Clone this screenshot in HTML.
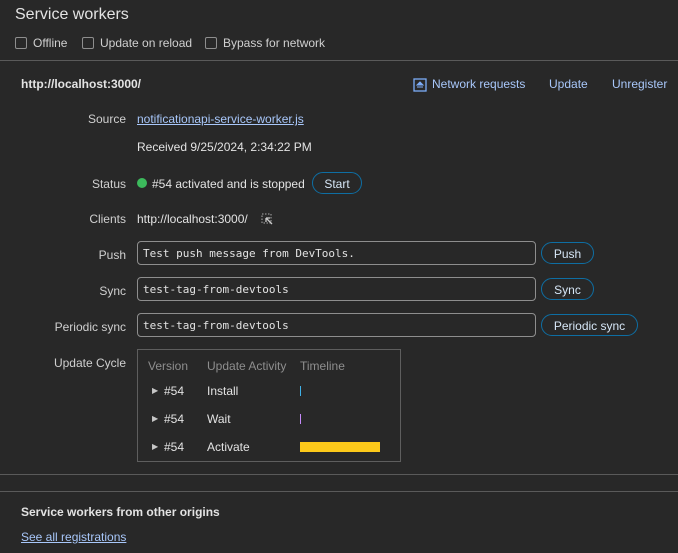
<!DOCTYPE html>
<html><head><meta charset="utf-8"><style>
html,body{margin:0;padding:0;background:#282828;width:678px;height:553px;overflow:hidden;font-family:"Liberation Sans","DejaVu Sans",sans-serif;color:#e3e3e3;font-size:12px}
.a{position:absolute;white-space:nowrap}
.lbl{position:absolute;right:552px;color:#d0d0d0;font-size:12px;white-space:nowrap}
.cb{position:absolute;top:37px;width:10px;height:10px;border:1px solid #8e8e8e;border-radius:2px}
.link{color:#a8c7fa}
.btn{position:absolute;height:22px;border:1px solid #0e6ea3;border-radius:12px;color:#d6e6f6;font-size:12px;line-height:22px;text-align:center;box-sizing:border-box}
.inp{position:absolute;left:137px;width:399px;height:24px;border:1px solid #8e8e8e;border-radius:4px;box-sizing:border-box;font-family:"DejaVu Sans Mono","Liberation Mono",monospace;font-size:11px;line-height:24px;padding-left:5px;color:#e3e3e3}
.hr{position:absolute;left:0;width:678px;height:1px;background:#5a5a5a}
.tri{position:absolute;font-size:8px;color:#c7c7c7}
</style></head><body>
<div class="a" style="left:15px;top:6px;font-size:16px;color:#e3e3e3">Service workers</div>
<div class="cb" style="left:15px"></div><div class="a" style="left:33px;top:36px;color:#d0d0d0">Offline</div>
<div class="cb" style="left:82px"></div><div class="a" style="left:100px;top:36px;color:#d0d0d0">Update on reload</div>
<div class="cb" style="left:205px"></div><div class="a" style="left:223px;top:36px;color:#d0d0d0">Bypass for network</div>
<div class="hr" style="top:60px"></div>
<div class="a" style="left:21px;top:77px;font-weight:bold;font-size:12px">http://localhost:3000/</div>
<svg class="a" style="left:413px;top:78px" width="14" height="14" viewBox="0 0 14 14"><rect x="1" y="1" width="12" height="12" fill="none" stroke="#7cacf8" stroke-width="1.3"/><path d="M4 9h6M7 4l-3 3h6z" stroke="#7cacf8" fill="#7cacf8" stroke-width="1"/></svg>
<div class="a link" style="left:432px;top:77px">Network requests</div>
<div class="a link" style="left:549px;top:77px">Update</div>
<div class="a link" style="left:612px;top:77px">Unregister</div>
<div class="lbl" style="top:112px">Source</div>
<div class="a link" style="left:137px;top:112px;text-decoration:underline">notificationapi-service-worker.js</div>
<div class="a" style="left:137px;top:140px">Received 9/25/2024, 2:34:22 PM</div>
<div class="lbl" style="top:177px">Status</div>
<div class="a" style="left:137px;top:178px;width:10px;height:10px;border-radius:50%;background:#3cba5c"></div>
<div class="a" style="left:152px;top:177px">#54 activated and is stopped</div>
<div class="btn" style="left:312px;top:172px;width:50px">Start</div>
<div class="lbl" style="top:212px">Clients</div>
<div class="a" style="left:137px;top:212px">http://localhost:3000/</div>
<svg class="a" style="left:261px;top:213px" width="12" height="12" viewBox="0 0 12 12"><rect x="1" y="1" width="9" height="9" fill="none" stroke="#aaa" stroke-dasharray="1.5 1.5"/><path d="M5 5l6 6M5 5h4M5 5v4" stroke="#ccc" stroke-width="1.3" fill="none"/></svg>
<div class="lbl" style="top:248px">Push</div>
<div class="inp" style="top:241px">Test push message from DevTools.</div>
<div class="btn" style="left:541px;top:242px;width:53px">Push</div>
<div class="lbl" style="top:284px">Sync</div>
<div class="inp" style="top:277px">test-tag-from-devtools</div>
<div class="btn" style="left:541px;top:278px;width:53px">Sync</div>
<div class="lbl" style="top:320px">Periodic sync</div>
<div class="inp" style="top:313px">test-tag-from-devtools</div>
<div class="btn" style="left:541px;top:314px;width:97px">Periodic sync</div>
<div class="lbl" style="top:356px">Update Cycle</div>
<div class="a" style="left:137px;top:349px;width:262px;height:111px;border:1px solid #5e5e5e"></div>
<div class="a" style="left:148px;top:359px;color:#8e8e8e">Version</div>
<div class="a" style="left:207px;top:359px;color:#8e8e8e">Update Activity</div>
<div class="a" style="left:300px;top:359px;color:#8e8e8e">Timeline</div>
<div class="tri" style="left:152px;top:386px">▶</div><div class="a" style="left:164px;top:384px">#54</div><div class="a" style="left:207px;top:384px">Install</div>
<div class="a" style="left:300px;top:386px;width:1px;height:10px;background:#3fb1e8"></div>
<div class="tri" style="left:152px;top:414px">▶</div><div class="a" style="left:164px;top:412px">#54</div><div class="a" style="left:207px;top:412px">Wait</div>
<div class="a" style="left:300px;top:414px;width:1px;height:10px;background:#c58af9"></div>
<div class="tri" style="left:152px;top:442px">▶</div><div class="a" style="left:164px;top:440px">#54</div><div class="a" style="left:207px;top:440px">Activate</div>
<div class="a" style="left:300px;top:442px;width:80px;height:10px;background:#fcc91a"></div>
<div class="hr" style="top:474px"></div>
<div class="hr" style="top:491px"></div>
<div class="a" style="left:21px;top:505px;font-weight:bold">Service workers from other origins</div>
<div class="a link" style="left:21px;top:530px;text-decoration:underline">See all registrations</div>
</body></html>
